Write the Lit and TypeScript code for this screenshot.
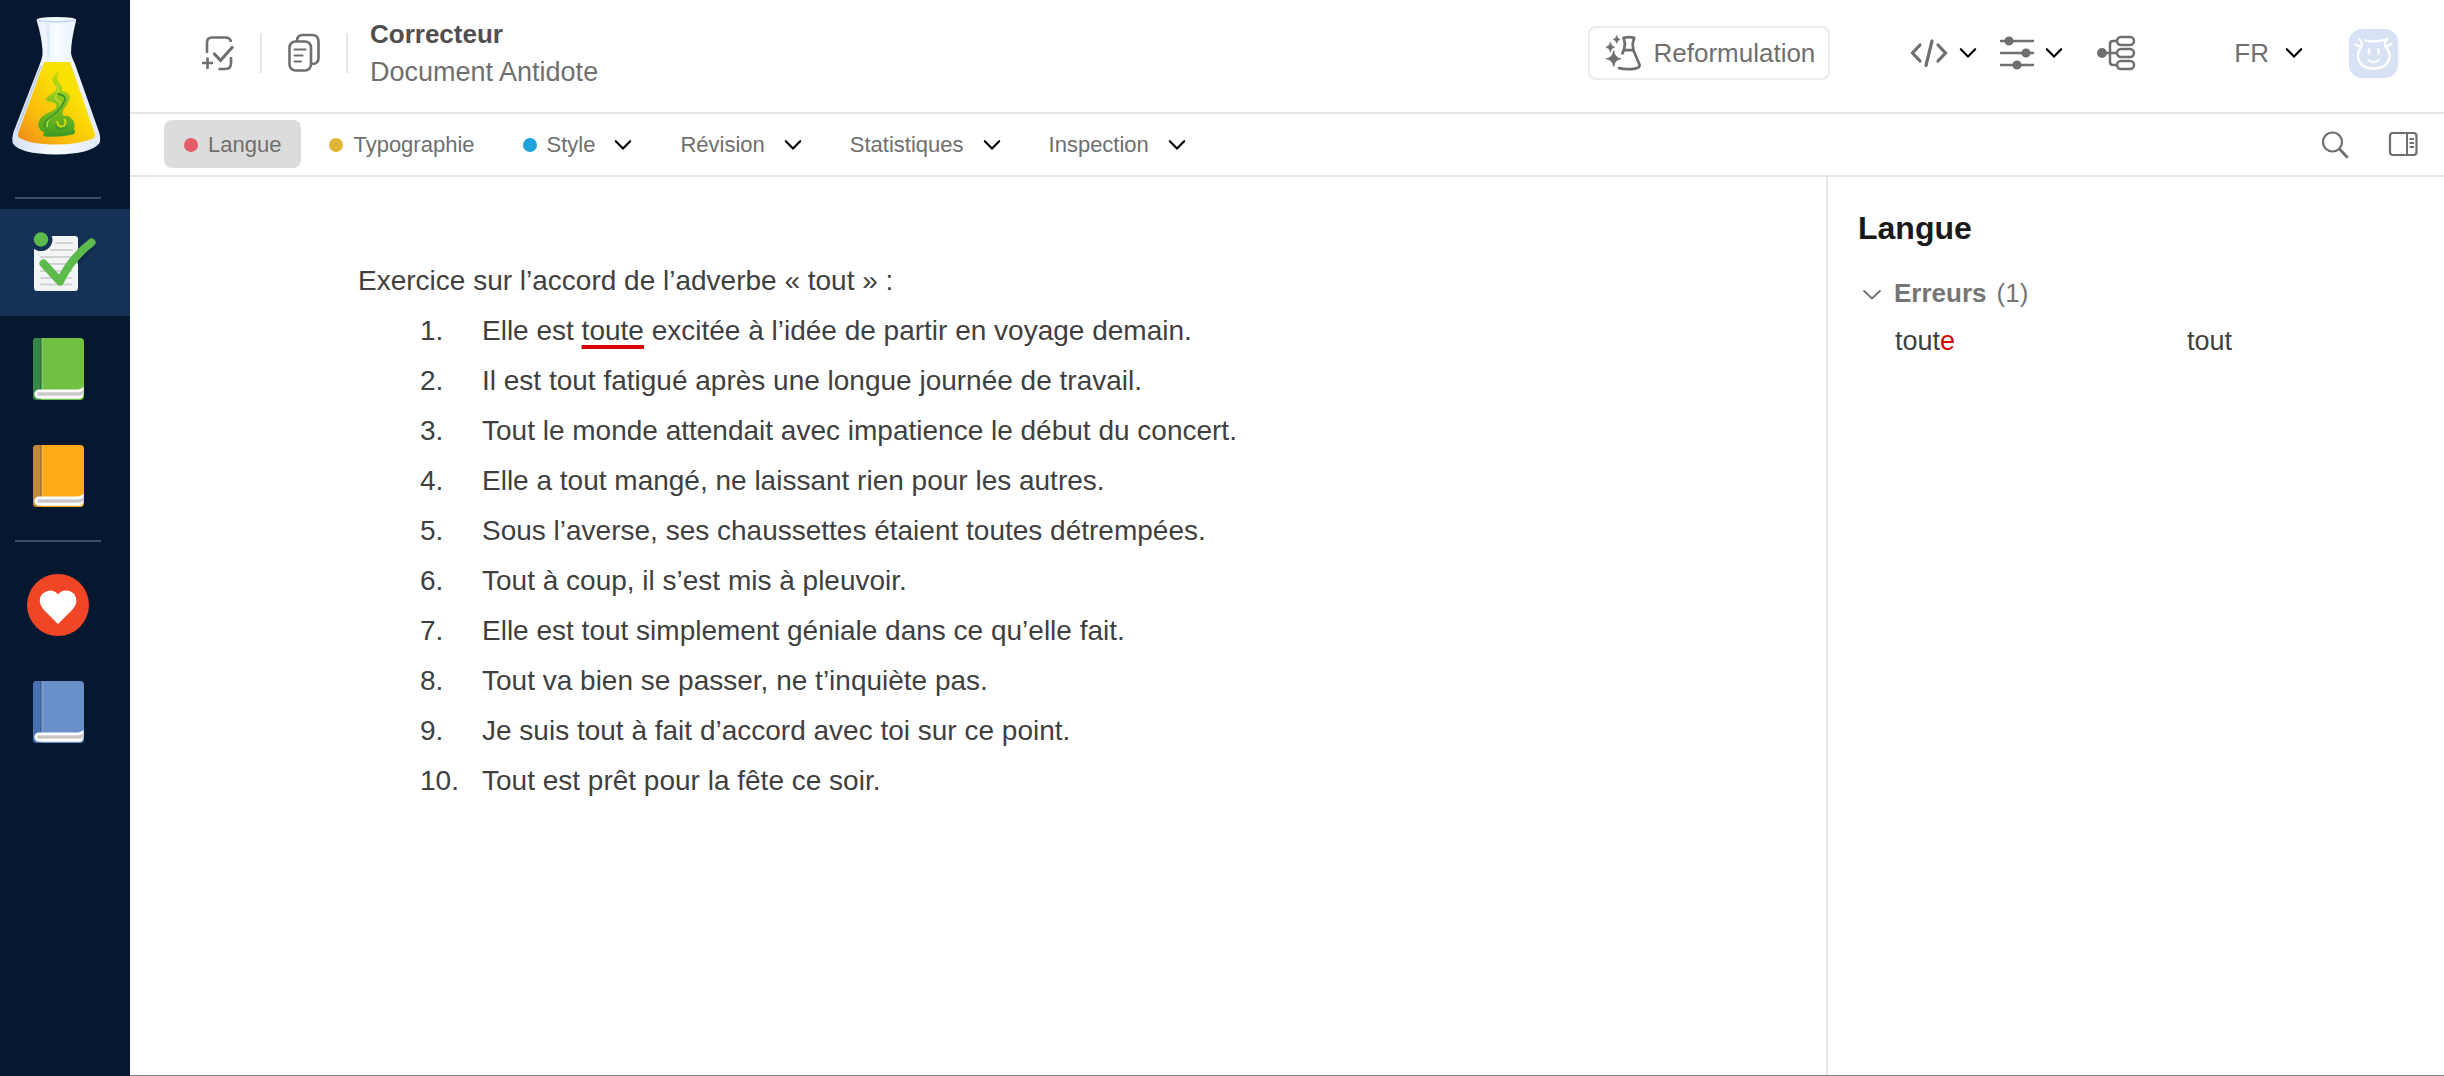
import { LitElement, html, css, svg, nothing } from "lit";
import { customElement, property } from "lit/decorators.js";

const chevron = html`<svg class="chev" viewBox="0 0 18 12" width="18" height="12" aria-hidden="true">
  <path d="M1.8 2.2 L9 9.6 L16.2 2.2" fill="none" stroke="currentColor" stroke-width="2.1" stroke-linecap="round" />
</svg>`;

const base = css`
  * { box-sizing: border-box; }
  svg { display: block; flex: none; }
  button {
    font: inherit;
    color: inherit;
    background: none;
    border: 0;
    padding: 0;
    margin: 0;
    display: flex;
    align-items: center;
    cursor: pointer;
  }
`;

const book = (cover: string, spine: string, hinge: string) => svg`
  <rect x="1" y="1" width="51" height="62" rx="4" fill="${cover}" />
  <path d="M5 1 H9 V63 H5 a4 4 0 0 1 -4 -4 V5 a4 4 0 0 1 4 -4 Z" fill="${spine}" />
  <rect x="8.4" y="1" width="1.2" height="58" fill="${hinge}" />
  <rect x="9.6" y="1" width="1.6" height="58" fill="#fff" opacity=".15" />
  <path d="M7 52.4 H45 Q50 52.2 51.6 49.5 V56 Q51 61.6 48 61.8 H7 a4.7 4.7 0 0 1 0 -9.4 Z" fill="#fff" />
  <path d="M7 55.3 H47 Q50 55 51.6 53 V55.4 Q50.4 58.6 47 58.7 H7 a1.7 1.7 0 0 1 0 -3.4 Z" fill="#c9c9c9" />`;

@customElement("app-sidebar")
class AppSidebar extends LitElement {
  static styles = [base, css`
    :host {
      display: block;
      flex: none;
      width: 130px;
      background: #06182f;
    }
    .logo { display: block; padding: 16px 0 0 11px; height: 197px; }
    .rule { width: 86px; height: 2px; margin-left: 15px; background: #3c4c68; }
    .group { padding: 10px 0; }
    .item { width: 100%; height: 107px; padding: 0 0 1px 32px; }
    .active { background: #153256; }
    .wide { padding-left: 26px; }
  `];

  render() {
    return html`
      <nav aria-label="Antidote">
        <a class="logo" href="#" aria-label="Antidote">
          <svg viewBox="0 0 92 142" width="92" height="142">
            <defs>
              <linearGradient id="glass" x1="0" x2="1">
                <stop offset="0" stop-color="#d5e2f6" /><stop offset=".5" stop-color="#f6fbff" /><stop offset="1" stop-color="#dfeafa" />
              </linearGradient>
              <linearGradient id="liquid" x1="0.05" y1="1" x2=".65" y2=".35">
                <stop offset="0" stop-color="#f08a1c" /><stop offset=".45" stop-color="#fbbd0c" /><stop offset="1" stop-color="#f9e005" />
              </linearGradient>
              <linearGradient id="snake" x1="0" y1="0" x2="0" y2="1">
                <stop offset="0" stop-color="#c6db10" /><stop offset=".5" stop-color="#8cc41c" /><stop offset="1" stop-color="#3f9f22" />
              </linearGradient>
            </defs>
            <path d="M25.5 4 Q26 1 45 1 Q65 1 65.2 4 Q60 25 60 37 Q60.5 41 64 48 L88 116 Q90 122 88.6 127 Q80 138 45 138.5 Q8 138 1.6 127 Q0.6 122 2.5 116 L30 45 Q32 40 31.5 34 Q30.5 20 25.5 4 Z" fill="url(#glass)" />
            <path d="M26.5 4.5 Q45 7 64.3 4.5" fill="none" stroke="#c3d5ee" stroke-width="1.4" />
            <path d="M34 7 Q37 24 36 42 H39 Q40 24 38 7 Z" fill="#dce8f8" opacity=".8" />
            <path d="M33 46 H59 L83.5 117 Q85 121 82 122.5 Q68 128.5 45 128.5 Q20 128.5 8.5 122 Q6 120 7.5 116 Z" fill="url(#liquid)" />
            <path d="M30 50 L6 114" stroke="#b9cbe8" stroke-width="1.5" fill="none" />
            <path d="M47.5 53 Q46 58 42 61 Q40 65 44 69 Q48 73 42 77 Q34 81 35 85 Q40 85 45 88 Q47 92 41 95 Q28 100 27 108 Q28 115 33 116 Q31 120 34 120.5 Q50 121.5 62 118.5 Q66 117 63 113 Q65 106 60 102 Q57 99 53 100 Q50 97 53 93 Q58 87 59 81 Q58 76 51 75 Q52 71 48 67 Q45 62 47 59 Z" fill="url(#snake)" />
            <path d="M45 69 Q50 74 45 79 Q43 83 49 86 Q52 90 46 96 Q35 102 36 111" fill="none" stroke="#b7dc35" stroke-width="1.6" />
            <path d="M47 78 Q57 80 53 86 Q50 92 46 96 Q40 100 36 104 Q31 108 36 114 M36 118 Q48 120 62 116 M45 110 Q48 116 55 111" fill="none" stroke="#3f9728" stroke-width="1.8" stroke-linecap="round" />
            <path d="M46 105 Q47 112 53 110 Q56 106 53 103" fill="none" stroke="#d8dc10" stroke-width="1.8" />
          </svg>
        </a>
        <div class="rule"></div>
        <div class="group">
          <button class="item active" aria-label="Correcteur" aria-current="page">
            <svg viewBox="0 0 68 60" width="68" height="60">
              <path d="M2 6 a2.5 2.5 0 0 1 2 -2 H43 a3 3 0 0 1 3 3 V56 a3 3 0 0 1 -3 3 H5 a3 3 0 0 1 -3 -3 Z" fill="#f3f4f6" />
              <path d="M24 11 H40 M19 18 H40 M9 25 H40 M9 32 H40 M9 39 H39 M9 46 H39 M9 52.5 H39" stroke="#d2d2d4" stroke-width="2" stroke-linecap="round" />
              <circle cx="9" cy="7.5" r="11.5" fill="#153256" />
              <circle cx="9" cy="7.5" r="7.2" fill="#5cbb4a" />
              <path d="M47 29 Q53 21 61.5 13" fill="none" stroke="#0b2443" stroke-width="6" stroke-linecap="round" opacity=".5" />
              <path d="M11.5 31.5 L28 49.5 Q40 25 59.5 10.5" fill="none" stroke="#5cbb4a" stroke-width="8" stroke-linecap="round" stroke-linejoin="round" />
            </svg>
          </button>
          <button class="item" aria-label="Dictionnaires">
            <svg viewBox="0 0 53 64" width="53" height="64">${book("#70c044", "#358746", "#2b6c3b")}</svg>
          </button>
          <button class="item" aria-label="Guides">
            <svg viewBox="0 0 53 64" width="53" height="64">${book("#fdaa17", "#c28b3c", "#8d6230")}</svg>
          </button>
        </div>
        <div class="rule"></div>
        <div class="group">
          <button class="item wide" aria-label="Favoris">
            <svg viewBox="0 0 64 64" width="64" height="64">
              <circle cx="32" cy="32" r="31" fill="#f04625" />
              <path d="M32 51 L17 36 Q11 28 16 21 Q20 17.5 24 17.5 Q29 17.5 32 21.5 Q35 17.5 40 17.5 Q45 17.5 48.5 21.5 Q53 29 47 36 Z" fill="#fff" />
            </svg>
          </button>
          <button class="item" aria-label="Dictionnaire personnel">
            <svg viewBox="0 0 53 64" width="53" height="64">${book("#6a90c9", "#4672b4", "#3f5d8e")}</svg>
          </button>
        </div>
      </nav>
    `;
  }
}

@customElement("app-header")
class AppHeader extends LitElement {
  static styles = [base, css`
    :host {
      display: flex;
      align-items: center;
      height: 114px;
      padding: 0 46px 6px 71px;
      border-bottom: 2px solid #e5e5e5;
      color: #6f6f6f;
      font-size: 26px;
    }
    .sep { width: 2px; height: 40px; background: #e5e5e5; }
    .add { margin-right: 25px; }
    .docs { margin: 0 25px; }
    .titles { margin-left: 22px; line-height: 38px; }
    .titles h1 { margin: 0; font-size: 26px; line-height: 38px; color: #4f4f4f; }
    .titles p { margin: 0; font-size: 27px; }
    .reform {
      margin-left: auto;
      height: 54px;
      padding: 0 13px 0 15px;
      gap: 12px;
      border: 2px solid #ececec;
      border-radius: 8px;
    }
    .menu { gap: 10px; color: #000; }
    .code { margin-left: 79px; }
    .sliders { margin-left: 22px; }
    .tree { margin-left: 33px; }
    .lang { margin-left: 98px; gap: 16px; }
    .label { color: #6f6f6f; }
    .user { margin-left: 46px; }
  `];

  render() {
    return html`
      <button class="add" aria-label="Nouveau texte">
        <svg viewBox="0 0 34 36" width="34" height="36" fill="none" stroke="#6f6f6f" stroke-width="2.6">
          <path d="M6 18 V7.5 Q6 2.5 11 2.5 H24 Q29.5 2.5 30 7" />
          <path d="M17.5 34 H24 Q30 34 30 28.5 V22" />
          <path d="M12.5 18 L19.5 25.5 L32 11.5" stroke-width="3.2" />
          <path d="M1 28 H12 M6.5 22.5 V34" />
        </svg>
      </button>
      <div class="sep"></div>
      <button class="docs" aria-label="Documents">
        <svg viewBox="0 0 34 40" width="34" height="40" fill="none" stroke="#6f6f6f" stroke-width="2.6">
          <rect x="2.5" y="8.5" width="21.5" height="29" rx="6" />
          <path d="M10 8 Q10 2 16 2 H25 Q31.5 2 31.5 8.5 V25 Q31.5 31 25 31" />
          <path d="M7.5 16.5 H18.5 M7.5 22.5 H15.5 M7.5 28.5 H14" stroke-width="2.2" stroke-linecap="round" />
        </svg>
      </button>
      <div class="sep"></div>
      <div class="titles">
        <h1>Correcteur</h1>
        <p>Document Antidote</p>
      </div>
      <button class="reform">
        <svg viewBox="0 0 37 38" width="36" height="38" fill="none" stroke="#6f6f6f" stroke-width="2.8" stroke-linejoin="round">
          <path d="M19 3.5 Q24.5 2 30 3.5 L28.5 9 Q28.5 13 29.5 17 L35.5 31 Q36 34.5 31 35 Q22 36.5 14.5 34.5" stroke-linecap="round" />
          <path d="M19 3.5 L20.5 9 Q20.5 14 17.5 20.5 M19.5 16 H29" />
          <path d="M9 16.5 Q9.8 24 16.5 25 Q9.8 26 9 33 Q8 26 1 25 Q8 24 9 16.5 Z M5.5 8 Q6 12.3 10 13 Q6 13.5 5.5 18 Q5 13.5 1 13 Q5 12.3 5.5 8 Z M12 1 Q12.5 4.5 15.5 5 Q12.5 5.5 12 9 Q11.5 5.5 8.5 5 Q11.5 4.5 12 1 Z" fill="#6f6f6f" stroke-width=".8" />
        </svg>
        <span class="label">Reformulation</span>
      </button>
      <button class="menu code" aria-label="Code">
        <svg viewBox="0 0 40 30" width="40" height="30" fill="none" stroke="#6f6f6f" stroke-width="3.2" stroke-linecap="round">
          <path d="M11 7 L3.5 15 L11 23 M29 7 L36.5 15 L29 23 M23 3 L17 27.5" />
        </svg>
        ${chevron}
      </button>
      <button class="menu sliders" aria-label="Réglages">
        <svg viewBox="0 0 36 34" width="36" height="34" fill="#6f6f6f" stroke="#6f6f6f" stroke-width="2.4" stroke-linecap="round">
          <path d="M2 5 H34 M2 17 H34 M2 29 H34" />
          <circle cx="10" cy="5" r="3.4" /><circle cx="27" cy="17" r="3.4" /><circle cx="18" cy="29" r="3.4" />
        </svg>
        ${chevron}
      </button>
      <button class="tree" aria-label="Arbre">
        <svg viewBox="0 0 40 36" width="40" height="36" fill="none" stroke="#6f6f6f" stroke-width="2.5">
          <circle cx="6" cy="18" r="3.8" fill="#6f6f6f" />
          <path d="M6 18 H21 M21 6 H17 Q14 6 14 9 V27 Q14 30 17 30 H21" />
          <rect x="21" y="2" width="17" height="8" rx="4" /><rect x="21" y="14" width="17" height="8" rx="4" /><rect x="21" y="26" width="17" height="8" rx="4" />
        </svg>
      </button>
      <button class="menu lang"><span class="label">FR</span>${chevron}</button>
      <button class="user" aria-label="Compte">
        <svg viewBox="0 0 49 49" width="49" height="49">
          <rect width="49" height="49" rx="13" fill="#d7e3f5" />
          <path d="M12.5 17 Q8 24 9 29 Q11.5 39.5 24.5 39.5 Q38 39.5 40.5 29 Q41.5 24 36.5 17" fill="none" stroke="#fff" stroke-width="2.4" stroke-linecap="round" />
          <path d="M16 11.5 Q26 14 38.5 10 Q34.5 14 36.5 17" fill="none" stroke="#fff" stroke-width="2.2" stroke-linecap="round" stroke-linejoin="round" />
          <path d="M6.5 15.5 Q10 17.5 12.5 17 Q13.5 13 10 10 M42.5 15 Q39 17 36.5 17" fill="none" stroke="#fff" stroke-width="2.2" stroke-linecap="round" stroke-linejoin="round" />
          <path d="M19.5 31 Q24.5 35 30 31" fill="none" stroke="#fff" stroke-width="2" stroke-linecap="round" />
          <path d="M20 20.5 V24.5 M29.5 20.5 V24.5" stroke="#fff" stroke-width="2.4" stroke-linecap="round" />
        </svg>
      </button>
    `;
  }
}

interface Tab { label: string; dot?: string; menu?: boolean; active?: boolean }

const TABS: Tab[] = [
  { label: "Langue", dot: "red", active: true },
  { label: "Typographie", dot: "yellow" },
  { label: "Style", dot: "blue", menu: true },
  { label: "Révision", menu: true },
  { label: "Statistiques", menu: true },
  { label: "Inspection", menu: true },
];

@customElement("app-toolbar")
class AppToolbar extends LitElement {
  static styles = [base, css`
    :host {
      display: flex;
      align-items: center;
      height: 63px;
      padding: 0 26px 2px 34px;
      border-bottom: 2px solid #e5e5e5;
      color: #6f6f6f;
      font-size: 22px;
    }
    .tabs { display: flex; gap: 8px; }
    .tab { height: 48px; padding: 2px 20px 0; border-radius: 8px; }
    .active { background: #dcdcdc; }
    .dot { width: 14px; height: 14px; border-radius: 50%; margin-right: 10px; }
    .red { background: #e35d69; }
    .yellow { background: #e1b637; }
    .blue { background: #20a2dd; }
    .chev { margin-left: 19px; color: #000; }
    .tools { display: flex; align-items: center; gap: 39px; margin-left: auto; }
  `];

  render() {
    return html`
      <div class="tabs">
        ${TABS.map((t) => html`
          <button class="tab ${t.active ? "active" : ""}">
            ${t.dot ? html`<span class="dot ${t.dot}"></span>` : nothing}
            <span>${t.label}</span>
            ${t.menu ? chevron : nothing}
          </button>`)}
      </div>
      <div class="tools">
        <button aria-label="Rechercher">
          <svg viewBox="0 0 28 28" width="28" height="28" fill="none" stroke="#6f6f6f">
            <circle cx="11.5" cy="12" r="9.5" stroke-width="2.2" />
            <path d="M18.5 19 L26 27" stroke-width="2.8" stroke-linecap="round" />
          </svg>
        </button>
        <button aria-label="Panneau">
          <svg viewBox="0 0 30 26" width="30" height="26" fill="none" stroke="#6f6f6f" stroke-width="2.2">
            <rect x="2" y="2" width="26.5" height="22" rx="3" />
            <path d="M19 2 V24 M21.5 8 H26 M21.5 12 H26 M21.5 16 H26" stroke-width="2" />
          </svg>
        </button>
      </div>
    `;
  }
}

const SENTENCES = [
  html`Elle est <span class="error">toute</span> excitée à l’idée de partir en voyage demain.`,
  "Il est tout fatigué après une longue journée de travail.",
  "Tout le monde attendait avec impatience le début du concert.",
  "Elle a tout mangé, ne laissant rien pour les autres.",
  "Sous l’averse, ses chaussettes étaient toutes détrempées.",
  "Tout à coup, il s’est mis à pleuvoir.",
  "Elle est tout simplement géniale dans ce qu’elle fait.",
  "Tout va bien se passer, ne t’inquiète pas.",
  "Je suis tout à fait d’accord avec toi sur ce point.",
  "Tout est prêt pour la fête ce soir.",
];

@customElement("app-document")
class AppDocument extends LitElement {
  static styles = [base, css`
    :host {
      display: block;
      flex: 1;
      padding: 79px 40px 80px 228px;
      color: #3f3f3f;
      font-size: 28px;
      line-height: 50px;
    }
    p { margin: 0; }
    ol { list-style: none; margin: 0; padding: 0 0 0 62px; }
    li { display: flex; }
    .num { width: 62px; flex: none; }
    .error {
      text-decoration: underline 4px #d60000;
      text-underline-offset: 5px;
      text-decoration-skip-ink: none;
    }
  `];

  render() {
    return html`
      <p>Exercice sur l’accord de l’adverbe « tout » :</p>
      <ol>
        ${SENTENCES.map((s, i) => html`<li><span class="num">${i + 1}.</span><span>${s}</span></li>`)}
      </ol>
    `;
  }
}

@customElement("app-panel")
class AppPanel extends LitElement {
  @property({ type: Number }) count = 1;

  static styles = [base, css`
    :host {
      display: block;
      flex: none;
      width: 618px;
      padding: 30px 0 30px 30px;
      border-left: 2px solid #e5e5e5;
      font-size: 26px;
    }
    h2 { margin: 0; font-size: 32px; line-height: 42px; color: #1a1a1a; }
    .section { margin-top: 20px; height: 48px; gap: 10px; padding-left: 4px; color: #757575; }
    .section svg { margin-right: 2px; }
    .row {
      display: grid;
      grid-template-columns: 1fr 1fr;
      column-gap: 35px;
      padding-left: 37px;
      font-size: 27px;
      line-height: 48px;
      color: #3f3f3f;
    }
    .wrong { color: #d60000; }
  `];

  render() {
    return html`
      <h2>Langue</h2>
      <button class="section" aria-expanded="true">
        <svg viewBox="0 0 20 16" width="20" height="16"><path d="M1.5 5.5 L10 13.5 L18.5 5.5" fill="none" stroke="#6f6f6f" stroke-width="1.8" /></svg>
        <b>Erreurs</b><span>(${this.count})</span>
      </button>
      <div class="row">
        <span>tout<span class="wrong">e</span></span>
        <span>tout</span>
      </div>
    `;
  }
}

@customElement("app-root")
class AppRoot extends LitElement {
  static styles = [base, css`
    :host {
      display: flex;
      min-height: 100vh;
      background: #fff;
      font-family: "Liberation Sans", Arial, Helvetica, sans-serif;
    }
    .main {
      flex: 1;
      min-width: 0;
      display: flex;
      flex-direction: column;
      border-bottom: 1px solid #808080;
    }
    .body { flex: 1; display: flex; }
  `];

  render() {
    return html`
      <app-sidebar></app-sidebar>
      <div class="main">
        <app-header></app-header>
        <app-toolbar></app-toolbar>
        <div class="body">
          <app-document></app-document>
          <app-panel></app-panel>
        </div>
      </div>
    `;
  }
}
